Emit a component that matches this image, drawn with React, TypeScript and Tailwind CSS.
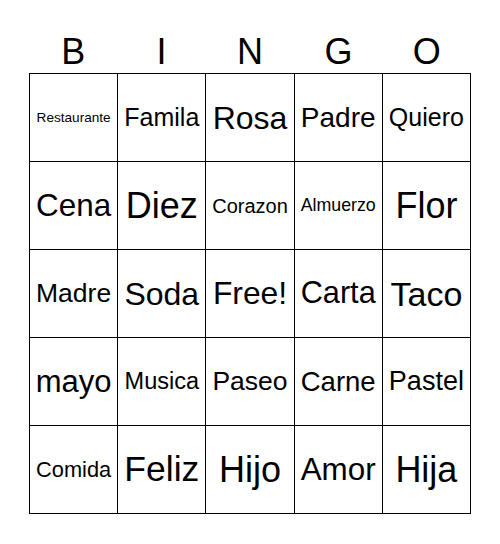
const letters = ["B", "I", "N", "G", "O"];

// font sizes picked so every word fills ~75px of its cell, capped at 36px
const cells: { word: string; size: string }[] = [
  { word: "Restaurante", size: "text-[13.6px]" },
  { word: "Famila", size: "text-[25px]" },
  { word: "Rosa", size: "text-[32px]" },
  { word: "Padre", size: "text-[28px]" },
  { word: "Quiero", size: "text-[25px]" },

  { word: "Cena", size: "text-[31.4px]" },
  { word: "Diez", size: "text-[36px]" },
  { word: "Corazon", size: "text-[20px]" },
  { word: "Almuerzo", size: "text-[17.8px]" },
  { word: "Flor", size: "text-[36px]" },

  { word: "Madre", size: "text-[26.5px]" },
  { word: "Soda", size: "text-[32px]" },
  { word: "Free!", size: "text-[31.8px]" },
  { word: "Carta", size: "text-[30.7px]" },
  { word: "Taco", size: "text-[34px]" },

  { word: "mayo", size: "text-[31px]" },
  { word: "Musica", size: "text-[23.5px]" },
  { word: "Paseo", size: "text-[26.5px]" },
  { word: "Carne", size: "text-[27.5px]" },
  { word: "Pastel", size: "text-[27px]" },

  { word: "Comida", size: "text-[21.8px]" },
  { word: "Feliz", size: "text-[35.5px]" },
  { word: "Hijo", size: "text-[36px]" },
  { word: "Amor", size: "text-[31.4px]" },
  { word: "Hija", size: "text-[36px]" },
];

export default function App() {
  return (
    <div className="w-[500px] h-[544px] bg-white text-black font-['Liberation_Sans',Arial,sans-serif]">
      <div className="ml-[29px] w-[442px]">
        <div className="grid grid-cols-5 h-[73px] items-end">
          {letters.map((l) => (
            <div key={l} className="text-center text-[36px] leading-[42px]">
              {l}
            </div>
          ))}
        </div>
        <div className="grid grid-cols-5 border-l border-t border-black">
          {cells.map((c) => (
            <div
              key={c.word}
              className="h-[88px] flex items-center justify-center border-r border-b border-black whitespace-nowrap"
            >
              <span className={`${c.size} leading-none`}>{c.word}</span>
            </div>
          ))}
        </div>
      </div>
    </div>
  );
}
